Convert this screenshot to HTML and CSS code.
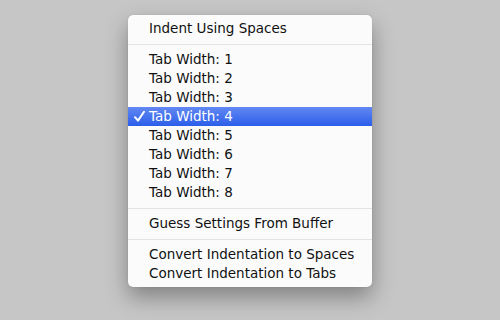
FILE: index.html
```html
<!DOCTYPE html>
<html>
<head>
<meta charset="utf-8">
<link rel="stylesheet" href="styles.css">
</head>
<body>
<div class="stage">
  <div class="menu">
    <div class="item">Indent Using Spaces</div>
    <div class="sep"></div>
    <div class="item">Tab Width: 1</div>
    <div class="item">Tab Width: 2</div>
    <div class="item">Tab Width: 3</div>
    <div class="item selected"><svg class="check" width="11" height="11" viewBox="0 0 11 11"><path d="M1 6.2 L4 9.6 L10 0.8" fill="none" stroke="#fff" stroke-width="2" stroke-linecap="round" stroke-linejoin="round"/></svg>Tab Width: 4</div>
    <div class="item">Tab Width: 5</div>
    <div class="item">Tab Width: 6</div>
    <div class="item">Tab Width: 7</div>
    <div class="item">Tab Width: 8</div>
    <div class="sep"></div>
    <div class="item">Guess Settings From Buffer</div>
    <div class="sep"></div>
    <div class="item">Convert Indentation to Spaces</div>
    <div class="item">Convert Indentation to Tabs</div>
  </div>
</div>
</body>
</html>
```
FILE: styles.css
```css
html, body {
  margin: 0;
  padding: 0;
  width: 500px;
  height: 320px;
  overflow: hidden;
  background: #c6c6c6;
}
.stage {
  display: flex;
  justify-content: center;
  padding-top: 15px;
}
.menu {
  width: 244px;
  box-sizing: border-box;
  padding: 4px 0;
  background: #fbfbfb;
  border-radius: 5px;
  box-shadow: 0 10px 22px rgba(0,0,0,0.35), 0 0 1px rgba(0,0,0,0.25);
  font-family: "DejaVu Sans", "Lucida Grande", sans-serif;
  font-size: 13.5px;
  color: #111;
}
.item {
  position: relative;
  height: 19px;
  line-height: 19px;
  padding-left: 21px;
  white-space: nowrap;
}
.item.selected {
  background: linear-gradient(#6288f3, #2b5ee9);
  color: #fff;
}
.check {
  position: absolute;
  left: 6px;
  top: 4px;
}
.sep {
  height: 12px;
  display: flex;
  align-items: center;
}
.sep::after {
  content: "";
  display: block;
  width: 100%;
  height: 1px;
  background: #e3e3e3;
}
```
